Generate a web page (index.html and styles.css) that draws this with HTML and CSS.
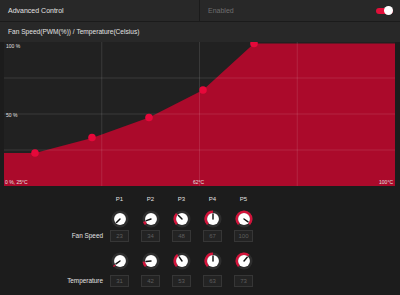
FILE: index.html
```html
<!DOCTYPE html>
<html lang="en">
<head>
    <meta charset="UTF-8">
    <title>Advanced Control</title>
    <link rel="stylesheet" href="styles.css">
</head>
<body>
    <div class="panel">
        <div class="bar">
            <div class="cell title">Advanced Control</div>
            <div class="cell status">
                <span>Enabled</span>
                <span class="toggle"><span class="thumb"></span></span>
            </div>
        </div>
        <div class="subbar">Fan Speed(PWM(%)) / Temperature(Celsius)</div>

        <div class="chart">
            <svg width="391" height="144" viewBox="0 0 391 144">
                <path class="area" d="M0 111 L31 111 L88 96 L145 75.5 L199 48 L250 1.5 L391 1.5 L391 144 L0 144 Z"/>
                <g class="grid">
                    <line x1="97.75" y1="0" x2="97.75" y2="144"/>
                    <line x1="195.5" y1="0" x2="195.5" y2="144"/>
                    <line x1="293.25" y1="0" x2="293.25" y2="144"/>
                    <line x1="0" y1="36" x2="391" y2="36"/>
                    <line x1="0" y1="72" x2="391" y2="72"/>
                    <line x1="0" y1="108" x2="391" y2="108"/>
                </g>
                <g class="dots">
                    <circle cx="31" cy="111" r="3.8"/>
                    <circle cx="88" cy="95.5" r="3.8"/>
                    <circle cx="145" cy="75.5" r="3.8"/>
                    <circle cx="199" cy="48" r="3.8"/>
                    <circle cx="250" cy="1.5" r="3.8"/>
                </g>
                <g class="axis">
                    <text x="2" y="6">100 %</text>
                    <text x="2" y="75">50 %</text>
                    <text x="1" y="142">0 %, 25°C</text>
                    <text x="189" y="142">62°C</text>
                    <text x="389" y="142" text-anchor="end">100°C</text>
                </g>
            </svg>
        </div>

        <div class="points">
            <div class="labels">
                <div class="label fan">Fan Speed</div>
                <div class="label temp">Temperature</div>
            </div>

            <div class="col">
                <div class="head">P1</div>
                <svg class="knob" viewBox="0 0 20 20">
                    <circle class="track" cx="10" cy="10" r="8"/>
                    <circle class="face" cx="10" cy="10" r="6.6"/>
                    <line class="needle" x1="10" y1="10" x2="6.11" y2="13.89"/>
                </svg>
                <div class="value">23</div>
                <svg class="knob lower" viewBox="0 0 20 20">
                    <circle class="track" cx="10" cy="10" r="8"/>
                    <path class="arc" d="M4.343 15.657 A8 8 0 0 1 3.447 14.589"/>
                    <circle class="face" cx="10" cy="10" r="6.6"/>
                    <line class="needle" x1="10" y1="10" x2="5.49" y2="13.15"/>
                </svg>
                <div class="value second">31</div>
            </div>

            <div class="col">
                <div class="head">P2</div>
                <svg class="knob" viewBox="0 0 20 20">
                    <circle class="track" cx="10" cy="10" r="8"/>
                    <path class="arc" d="M4.343 15.657 A8 8 0 0 1 2.482 12.736"/>
                    <circle class="face" cx="10" cy="10" r="6.6"/>
                    <line class="needle" x1="10" y1="10" x2="4.83" y2="11.88"/>
                </svg>
                <div class="value">34</div>
                <svg class="knob lower" viewBox="0 0 20 20">
                    <circle class="track" cx="10" cy="10" r="8"/>
                    <path class="arc" d="M4.343 15.657 A8 8 0 0 1 2.03 10.697"/>
                    <circle class="face" cx="10" cy="10" r="6.6"/>
                    <line class="needle" x1="10" y1="10" x2="4.52" y2="10.48"/>
                </svg>
                <div class="value second">42</div>
            </div>

            <div class="col">
                <div class="head">P3</div>
                <svg class="knob" viewBox="0 0 20 20">
                    <circle class="track" cx="10" cy="10" r="8"/>
                    <path class="arc" d="M4.343 15.657 A8 8 0 0 1 4.343 4.343"/>
                    <circle class="face" cx="10" cy="10" r="6.6"/>
                    <line class="needle" x1="10" y1="10" x2="6.11" y2="6.11"/>
                </svg>
                <div class="value">48</div>
                <svg class="knob lower" viewBox="0 0 20 20">
                    <circle class="track" cx="10" cy="10" r="8"/>
                    <path class="arc" d="M4.343 15.657 A8 8 0 0 1 5.411 3.446"/>
                    <circle class="face" cx="10" cy="10" r="6.6"/>
                    <line class="needle" x1="10" y1="10" x2="6.85" y2="5.5"/>
                </svg>
                <div class="value second">53</div>
            </div>

            <div class="col">
                <div class="head">P4</div>
                <svg class="knob" viewBox="0 0 20 20">
                    <circle class="track" cx="10" cy="10" r="8"/>
                    <path class="arc" d="M4.343 15.657 A8 8 0 0 1 10 2"/>
                    <circle class="face" cx="10" cy="10" r="6.6"/>
                    <line class="needle" x1="10" y1="10" x2="10" y2="4.5"/>
                </svg>
                <div class="value">67</div>
                <svg class="knob lower" viewBox="0 0 20 20">
                    <circle class="track" cx="10" cy="10" r="8"/>
                    <path class="arc" d="M4.343 15.657 A8 8 0 0 1 10 2"/>
                    <circle class="face" cx="10" cy="10" r="6.6"/>
                    <line class="needle" x1="10" y1="10" x2="10" y2="4.5"/>
                </svg>
                <div class="value second">63</div>
            </div>

            <div class="col">
                <div class="head">P5</div>
                <svg class="knob" viewBox="0 0 20 20">
                    <circle class="track" cx="10" cy="10" r="8"/>
                    <path class="arc" d="M4.343 15.657 A8 8 0 1 1 15.657 15.657"/>
                    <circle class="face" cx="10" cy="10" r="6.6"/>
                    <line class="needle" x1="10" y1="10" x2="14.51" y2="13.15"/>
                </svg>
                <div class="value">100</div>
                <svg class="knob lower" viewBox="0 0 20 20">
                    <circle class="track" cx="10" cy="10" r="8"/>
                    <path class="arc" d="M4.343 15.657 A8 8 0 0 1 15.142 3.872"/>
                    <circle class="face" cx="10" cy="10" r="6.6"/>
                    <line class="needle" x1="10" y1="10" x2="13.54" y2="5.79"/>
                </svg>
                <div class="value second">73</div>
            </div>
        </div>
    </div>
</body>
</html>
```

FILE: styles.css
```css
body {
    margin: 0;
    background: #1c1c1c;
    font-family: 'Liberation Sans', Arial, sans-serif;
    color: #e2e2e2;
}
.panel {
    width: 400px;
    height: 295px;
    overflow: hidden;
}
.bar {
    display: flex;
    height: 21px;
    background: #282828;
    border-bottom: 1px solid #1b1b1b;
}
.cell {
    display: flex;
    align-items: center;
    font-size: 7px;
}
.title {
    width: 191px;
    padding-left: 8px;
    border-right: 1px solid #1b1b1b;
}
.status {
    flex: 1;
    justify-content: space-between;
    padding: 0 7px 0 8px;
    color: #6f6f6f;
}
.toggle {
    position: relative;
    width: 17px;
    height: 6px;
    border-radius: 3px;
    background: #e0103a;
}
.toggle .thumb {
    position: absolute;
    right: 0;
    top: -1.5px;
    width: 9px;
    height: 9px;
    border-radius: 50%;
    background: #fff;
}
.subbar {
    height: 20px;
    line-height: 20px;
    padding-left: 8px;
    font-size: 6.6px;
    background: #282828;
}
.chart {
    margin: 0 5px 4px 4px;
    height: 144px;
    background: #212121;
}
.chart svg {
    display: block;
}
.area {
    fill: #ab0a2b;
}
.grid line {
    stroke: rgba(255, 255, 255, 0.11);
    stroke-width: 1;
}
.dots circle {
    fill: #e6083a;
}
.axis text {
    font-family: 'Liberation Sans', Arial, sans-serif;
    font-size: 5px;
    fill: #e0e0e0;
}
.points {
    display: flex;
    padding: 4px 0 0 4px;
}
.labels {
    width: 100px;
    padding-top: 36px;
    text-align: right;
    font-size: 6.4px;
}
.label {
    height: 12px;
    line-height: 12px;
    padding-right: 1px;
}
.label.temp {
    margin-top: 33px;
}
.col {
    width: 31px;
    display: flex;
    flex-direction: column;
    align-items: center;
}
.head {
    height: 10px;
    line-height: 10px;
    font-size: 6px;
}
.knob {
    display: block;
    width: 18px;
    height: 18px;
    margin-top: 6px;
}
.knob.lower {
    margin-top: 10px;
}
.track {
    fill: none;
    stroke: #2e2e2e;
    stroke-width: 3;
}
.arc {
    fill: none;
    stroke: #d1133a;
    stroke-width: 3;
}
.face {
    fill: #fff;
}
.needle {
    stroke: #111;
    stroke-width: 1.6;
    stroke-linecap: round;
}
.value {
    box-sizing: border-box;
    width: 19px;
    height: 12px;
    margin-top: 2px;
    line-height: 10px;
    text-align: center;
    font-size: 6px;
    color: #5e5e5e;
    background: #232323;
    border: 1px solid #363636;
}
.value.second {
    margin-top: 5px;
}
```
